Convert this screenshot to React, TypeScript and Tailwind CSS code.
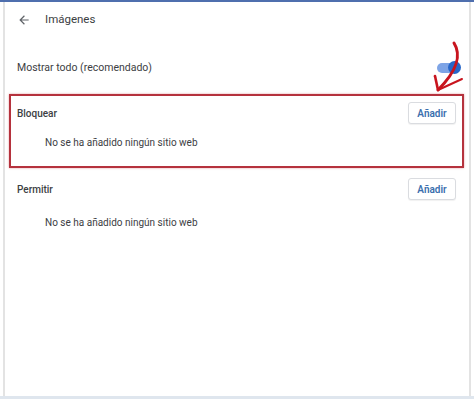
import React from 'react';

function AddButton() {
  return (
    <button
      type="button"
      className="h-[22px] w-[48px] rounded-[3px] border border-[#dadce0] bg-white text-[10px] font-semibold text-[#3b6fae] shadow-[0_1px_1px_rgba(0,0,0,0.06)]"
    >
      Añadir
    </button>
  );
}

function SiteList({ title, gap }: { title: string; gap: string }) {
  return (
    <div className="flex flex-col">
      <div className="flex h-[26px] items-center justify-between pr-[6px]">
        <span className="text-[10px] font-medium text-[#3c4043]">{title}</span>
        <AddButton />
      </div>
      <div className={`pl-[28px] text-[10px] text-[#3c4043] ${gap}`}>
        No se ha añadido ningún sitio web
      </div>
    </div>
  );
}

export default function App() {
  return (
    <div
      className="relative h-[399px] w-[474px] overflow-hidden bg-white"
      style={{ fontFamily: 'Roboto, "Liberation Sans", sans-serif' }}
    >
      <div className="h-[2px] bg-[#4f6fae]" />
      <div className="mx-[3px] flex h-[394px] flex-col border-x-2 border-[#e3e3e3] bg-white">
        {/* header */}
        <div className="flex h-[36px] items-center pl-[12px]">
          <svg width="14" height="14" viewBox="0 0 24 24" className="text-[#5f6368]">
            <path d="M20 11H7.83l5.59-5.59L12 4l-8 8 8 8 1.41-1.41L7.83 13H20v-2z" fill="currentColor" />
          </svg>
          <span className="ml-[14px] text-[11.5px] text-[#3c4043]">Imágenes</span>
        </div>

        {/* show all */}
        <div className="mt-[18px] flex h-[24px] items-center justify-between pl-[12px] pr-[12px]">
          <span className="text-[10.5px] text-[#3c4043]">Mostrar todo (recomendado)</span>
          <div className="relative h-[10px] w-[20px]">
            <div className="absolute left-0 top-0 h-[10px] w-[20px] rounded-full bg-[#7ea4e6]" />
            <div className="absolute left-[11px] top-[-2px] h-[13px] w-[13px] rounded-full bg-[#2767c9]" />
          </div>
        </div>

        {/* bloquear */}
        <div className="ml-[4px] mr-[5px] mt-[14px] h-[74px] border-2 border-[#b5323d] pl-[6px] pt-[4px] shadow-[0_0_2px_rgba(200,60,70,0.5)]">
          <SiteList title="Bloquear" gap="pt-[9px]" />
        </div>

        {/* permitir */}
        <div className="mr-[5px] mt-[8px] pl-[12px] pr-[2px]">
          <SiteList title="Permitir" gap="pt-[13px]" />
        </div>
      </div>
      <div className="h-[3px] bg-[#dfe6ee]" />

      {/* annotation arrow */}
      <svg
        className="pointer-events-none absolute left-[420px] top-[40px]"
        width="50"
        height="56"
        viewBox="0 0 50 56"
      >
        <path d="M34 3 C41 14 38 30 18 50" stroke="#c8141e" strokeWidth="3" fill="none" strokeLinecap="round" />
        <path d="M18 50 L15 36" stroke="#c8141e" strokeWidth="2.6" fill="none" strokeLinecap="round" />
        <path d="M18 50 L42 39" stroke="#c8141e" strokeWidth="2" fill="none" strokeLinecap="round" />
      </svg>
    </div>
  );
}
